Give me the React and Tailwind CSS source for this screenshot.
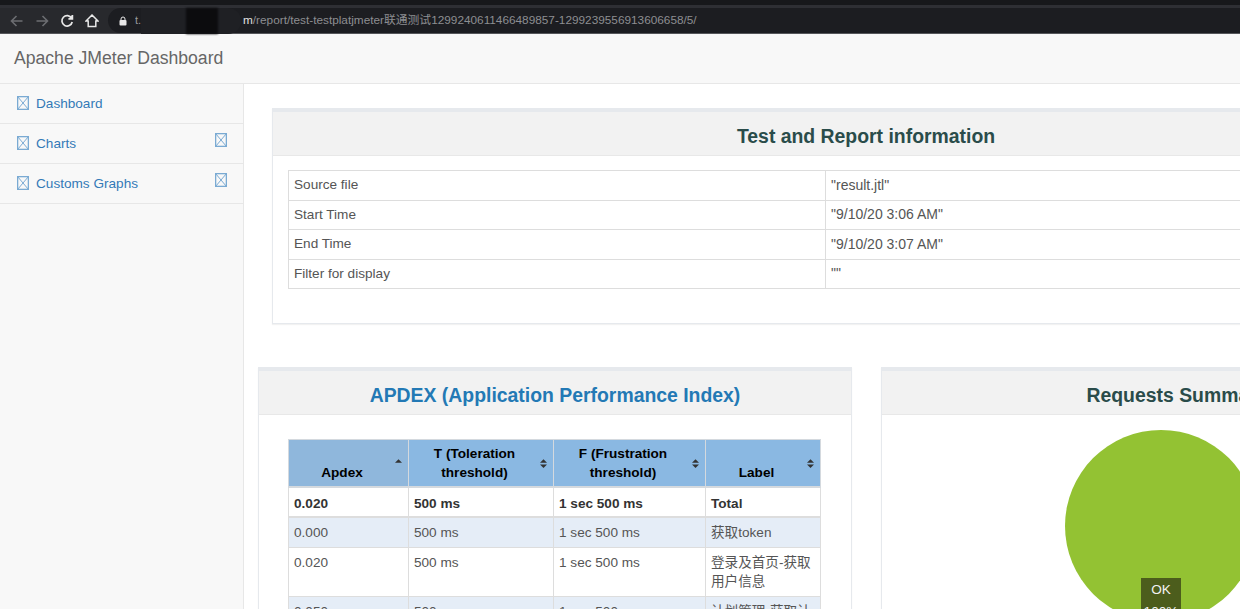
const sans = "font-['Liberation_Sans','Noto_Sans_CJK_SC',sans-serif]";

function BrokenIcon({ className = "" }) {
  return (
    <svg width="12" height="14" viewBox="0 0 12 14" fill="none" stroke="#7aaad3" strokeWidth="1.3" className={className}>
      <rect x="0.65" y="0.65" width="10.7" height="12.7" />
      <path d="M0.5 0.5 11.5 13.5M11.5 0.5 0.5 13.5" strokeWidth="1" />
    </svg>
  );
}

function SortIcon({ up = true, down = true }) {
  return (
    <svg width="7" height="11" viewBox="0 0 8 12" fill="#333" className="absolute right-[6px] top-[18px]">
      {up && <path d="M4 1 8 5H0Z" />}
      {down && <path d="M0 7H8L4 11Z" />}
    </svg>
  );
}

function BrowserBar() {
  return (
    <div className="h-[34px] shrink-0 bg-[#1d1e22] border-b border-[#55565a] flex flex-col">
      <div className="h-[5px] bg-[#17181b]" />
      <div className="h-[3px] bg-[#2e2f34]" />
      <div className="flex-1 flex items-center bg-[#28292d] relative">
        <div className="flex items-center w-[108px] shrink-0">
          <svg width="14" height="14" viewBox="0 0 14 14" fill="none" stroke="#6c6d71" strokeWidth="1.6" className="ml-[10px]">
            <path d="M12.5 7H2M6.5 2 1.5 7l5 5" />
          </svg>
          <svg width="14" height="14" viewBox="0 0 14 14" fill="none" stroke="#6c6d71" strokeWidth="1.6" className="ml-[11px]">
            <path d="M1.5 7H12M7.5 2l5 5-5 5" />
          </svg>
          <svg width="14" height="14" viewBox="0 0 14 14" fill="none" stroke="#e8e8e8" strokeWidth="1.7" className="ml-[11px]">
            <path d="M11.6 4.2A5.2 5.2 0 1 0 12.2 8" />
            <path d="M12.4 1v4H8.4" fill="#e8e8e8" />
          </svg>
          <svg width="14" height="14" viewBox="0 0 14 14" fill="none" stroke="#e8e8e8" strokeWidth="1.5" className="ml-[11px]">
            <path d="M7 1 1 7h2.2v5.5h7.6V7H13Z" />
          </svg>
        </div>
        <div className="flex-1 h-[25px] bg-[#1c1d21] rounded-l-full flex items-center pl-[11px]">
          <svg width="8" height="10" viewBox="0 0 8 10" className="shrink-0">
            <path d="M2 4V3a2 2 0 0 1 4 0v1" fill="none" stroke="#e8e8e8" strokeWidth="1" />
            <rect x="0.5" y="4" width="7" height="5.5" rx="1" fill="#e8e8e8" />
          </svg>
          <span className={`${sans} text-[11px] text-[#9a9b9e] ml-[8px] w-[8px] shrink-0 overflow-hidden`}>t.</span>
          <span className="w-[100px] shrink-0" />
          <span className={`${sans} text-[11.8px] text-[#8d8e91] whitespace-nowrap`}>
            <span className="text-[#e0e0e0]">m</span>/report/test-testplatjmeter联通测试1299240611466489857-1299239556913606658/5/
          </span>
        </div>
        <div className="absolute left-[141px] top-0 w-[100px] h-[26px] rounded-r-full bg-[#1f2024]" />
        <div className="absolute left-[186px] top-0 w-[32px] h-[26px] bg-[#0c0c0e] blur-[1px]" />
      </div>
    </div>
  );
}

function SideItem({ label, caret = false }) {
  return (
    <a className="h-[40px] flex items-center border-b border-[#e7e7e7] pl-[17px] pr-[16px] relative text-[#337ab7] text-[13.6px]">
      <BrokenIcon className="-mt-[2px]" />
      <span className="ml-[7px] pt-[1px]">{label}</span>
      {caret && <BrokenIcon className="absolute right-[16px] top-[9px]" />}
    </a>
  );
}

function Panel({ title, titleClass = "text-[#2a4c4a]", className = "", children }) {
  return (
    <div className={`border border-[#e6e9ed] border-t-[4px] shadow-[0_1px_1px_rgba(0,0,0,0.05)] bg-white shrink-0 ${className}`}>
      <div className={`h-[44px] pt-[6px] bg-[#f2f2f2] border-b border-[#e8e8e8] flex items-center justify-center text-[19.4px] font-bold ${titleClass}`}>
        {title}
      </div>
      {children}
    </div>
  );
}

const infoRows = [
  ["Source file", '"result.jtl"'],
  ["Start Time", '"9/10/20 3:06 AM"'],
  ["End Time", '"9/10/20 3:07 AM"'],
  ["Filter for display", '""'],
];

const apdexRows = [
  ["0.020", "500 ms", "1 sec 500 ms", "Total"],
  ["0.000", "500 ms", "1 sec 500 ms", "获取token"],
  ["0.020", "500 ms", "1 sec 500 ms", "登录及首页-获取用户信息"],
  ["0.050", "500 ms", "1 sec 500 ms", "计划管理-获取计划列表"],
];

const th = "relative border border-[#d4d9de] border-b-2 pl-[5px] pr-[18px] pb-[4px] align-bottom text-[13.6px] leading-[19px] font-bold text-black text-center";

export default function App() {
  return (
    <div className={`${sans} w-[1240px] h-[609px] overflow-hidden flex flex-col bg-white text-[13.6px] text-[#555]`}>
      <BrowserBar />
      <div className="h-[50px] shrink-0 bg-[#f8f8f8] border-b border-[#e7e7e7] flex items-center pl-[14px] text-[17.6px] text-[#666]">
        Apache JMeter Dashboard
      </div>
      <div className="flex flex-1 min-h-0">
        <div className="w-[244px] shrink-0 bg-[#f8f8f8] border-r border-[#e7e7e7] flex flex-col">
          <SideItem label="Dashboard" />
          <SideItem label="Charts" caret />
          <SideItem label="Customs Graphs" caret />
        </div>
        <div className="flex-1 min-w-0 overflow-hidden pt-[24px] pl-[14px]">
          <div className="w-[1210px] flex flex-col">
            <Panel title="Test and Report information" className="ml-[14px] w-[1188px] h-[216px]">
              <div className="pt-[14px] pl-[15px]">
                <table className="w-[1156px] table-fixed border-collapse">
                  <tbody>
                    {infoRows.map((row) => (
                      <tr key={row[0]} className="h-[29.5px]">
                        <td className="w-[537px] border border-[#ddd] px-[5px]">{row[0]}</td>
                        <td className="border border-[#ddd] px-[5px] text-[14px]">{row[1]}</td>
                      </tr>
                    ))}
                  </tbody>
                </table>
              </div>
            </Panel>
            <div className="flex gap-[29px] mt-[43px]">
              <Panel title="APDEX (Application Performance Index)" titleClass="text-[#2379b5]" className="w-[594px] h-[400px]">
                <div className="pt-[24px] pl-[29px]">
                  <table className="w-[533px] table-fixed border-collapse">
                    <thead>
                      <tr className="h-[47px] bg-[#8ab8e2]">
                        <th className={`${th} w-[120px] bg-[#8fb7dc]`}>
                          Apdex
                          <SortIcon down={false} />
                        </th>
                        <th className={`${th} w-[145px]`}>
                          T (Toleration threshold)
                          <SortIcon />
                        </th>
                        <th className={`${th} w-[152px]`}>
                          F (Frustration threshold)
                          <SortIcon />
                        </th>
                        <th className={th}>
                          Label
                          <SortIcon />
                        </th>
                      </tr>
                    </thead>
                    <tbody>
                      {apdexRows.map((row, i) => (
                        <tr key={row[3]} className={i === 0 ? "font-bold text-[#333]" : i % 2 === 1 ? "bg-[#e5edf7]" : ""}>
                          {row.map((cell) => (
                            <td
                              key={cell}
                              className={`border border-[#ddd] px-[5px] align-top leading-[19px] ${i === 0 ? "border-b-2 pt-[6px] pb-[3px]" : "pt-[5px] pb-[5px]"}`}
                            >
                              {cell}
                            </td>
                          ))}
                        </tr>
                      ))}
                    </tbody>
                  </table>
                </div>
              </Panel>
              <Panel title="Requests Summary" className="w-[592px] h-[400px]">
                <div className="relative pt-[15px] pl-[183px]">
                  <svg width="192" height="192" viewBox="0 0 192 192" className="block">
                    <circle cx="96" cy="96" r="96" fill="#93c233" />
                  </svg>
                  <div className="absolute left-[259px] top-[163px] w-[40px] h-[52px] bg-[#4c5d1c] text-[#f2f2f2] text-center leading-[22px] pt-[1px]">
                    OK
                    <br />
                    100%
                  </div>
                </div>
              </Panel>
            </div>
          </div>
        </div>
      </div>
    </div>
  );
}
